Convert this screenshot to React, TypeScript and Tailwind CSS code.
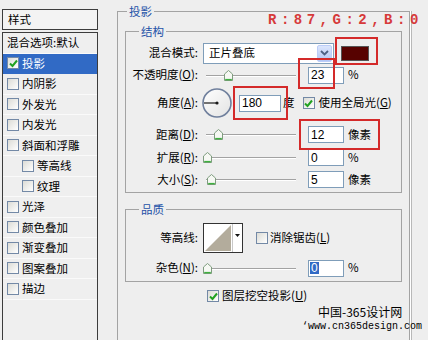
import type { ReactNode } from "react";

const items = [
  { t: "投影", on: true, sel: true },
  { t: "内阴影" },
  { t: "外发光" },
  { t: "内发光" },
  { t: "斜面和浮雕" },
  { t: "等高线", sub: true },
  { t: "纹理", sub: true },
  { t: "光泽" },
  { t: "颜色叠加" },
  { t: "渐变叠加" },
  { t: "图案叠加" },
  { t: "描边" },
];

function Check({ on }: { on?: boolean }) {
  return (
    <span className="w-[12px] h-[12px] shrink-0 border border-[#7389a6] bg-linear-to-br from-[#dcdcd6] to-white flex items-center justify-center">
      {on && (
        <svg width="9" height="9" viewBox="0 0 9 9">
          <path d="M1 4.5L3.5 7L8 1.5" stroke="#21a121" strokeWidth="2" fill="none" />
        </svg>
      )}
    </span>
  );
}

function Slider({ at }: { at: number }) {
  return (
    <div className="relative ml-[4px] w-[94px] h-[11px] shrink-0">
      <div className="absolute left-[4px] right-0 top-[5px] h-[2px] border-t border-[#a2a2a2] border-b border-b-white" />
      <svg className="absolute top-0" style={{ left: at }} width="9" height="11" viewBox="0 0 9 11">
        <path d="M0.5 10.5V4L4.5 0.5L8.5 4V10.5Z" fill="#f6f8f3" stroke="#7f9c7f" />
        <path d="M1.2 9.6H7.8" stroke="#3fb03f" strokeWidth="1.4" />
      </svg>
    </div>
  );
}

function Field({ v, sel, className = "w-[36px]" }: { v: string; sel?: boolean; className?: string }) {
  return (
    <span
      className={`${className} h-[17px] shrink-0 border border-[#7f9db9] bg-white pl-[1px] flex items-center font-['Liberation_Sans',sans-serif] text-[12px]`}
    >
      <span className={sel ? "bg-[#316ac5] text-white px-[1px]" : "px-[1px]"}>{v}</span>
    </span>
  );
}

function Label({ children }: { children: ReactNode }) {
  return <span className="w-[72px] shrink-0 text-right whitespace-nowrap">{children}</span>;
}

function SliderRow({ label, at, v, unit, className }: { label: ReactNode; at: number; v: string; unit: string; className: string }) {
  return (
    <div className={`flex items-center h-[21px] ${className}`}>
      <Label>{label}</Label>
      <Slider at={at} />
      <span className="ml-[12px]">
        <Field v={v} />
      </span>
      <span className="ml-[4px]">{unit}</span>
    </div>
  );
}

export default function App() {
  return (
    <div className="relative w-[428px] h-[340px] overflow-hidden bg-[#eeeeee] flex font-['Noto_Sans_CJK_SC',sans-serif] text-[11.5px] text-black leading-none">
      {/* style list */}
      <div className="ml-[2px] mt-[9px] w-[96px] shrink-0 flex flex-col">
        <div className="h-[21px] border border-[#3c3c3c] bg-[#f3f3f3] pl-[5px] flex items-center">样式</div>
        <div className="mt-[2px] flex-1 border-x border-t border-[#3c3c3c] bg-[#efefef]">
          <div className="h-[20.5px] pl-[4px] flex items-center border-b border-[#fafafa]">混合选项:默认</div>
          {items.map((it) => (
            <div
              key={it.t}
              className={`h-[20.5px] flex items-center gap-[3px] border-b ${it.sub ? "pl-[19px]" : "pl-[4px]"} ${
                it.sel ? "bg-[#316ac5] text-white border-[#316ac5]" : "border-[#fafafa]"
              }`}
            >
              <Check on={it.on} />
              {it.t}
            </div>
          ))}
        </div>
      </div>

      {/* drop shadow group */}
      <fieldset className="ml-[19px] mt-[5px] w-[293px] h-[345px] shrink-0 border border-[#a3a3a3] shadow-[1px_0_0_#ffffff,2px_0_0_#b8b8b8] flex flex-col">
        <legend className="ml-[9px] px-[2px] h-[12px] leading-[12px] text-[#2452a8]">投影</legend>

        <fieldset className="mt-[8px] mx-[7px] border border-[#a3a3a3] pb-[2px]">
          <legend className="ml-[13px] px-[2px] h-[12px] leading-[12px] text-[#2452a8]">结构</legend>

          <div className="mt-[4px] h-[24px] flex items-center">
            <Label>混合模式:</Label>
            <div className="ml-[5px] w-[131px] h-[21px] border border-[#7f9db9] bg-white flex items-center">
              <span className="flex-1 pl-[5px]">正片叠底</span>
              <span className="w-[15px] h-[17px] mr-[1px] rounded-[2px] border border-[#bccdf8] bg-linear-to-b from-[#dce6fd] to-[#b2c6f5] flex items-center justify-center">
                <svg width="9" height="6" viewBox="0 0 9 6">
                  <path d="M1 1L4.5 4.5L8 1" stroke="#4d6185" strokeWidth="1.8" fill="none" />
                </svg>
              </span>
            </div>
            <span className="ml-[7px] w-[28px] h-[15px] border border-[#555] bg-[#570200]" />
          </div>

          <div className="h-[20px] flex items-center">
            <Label>
              不透明度(<u>O</u>):
            </Label>
            <Slider at={21.5} />
            <span className="ml-[12px]">
              <Field v="23" />
            </span>
            <span className="ml-[4px]">%</span>
          </div>

          <div className="mt-[1px] h-[34px] flex items-center">
            <Label>
              角度(<u>A</u>):
            </Label>
            <svg className="ml-[4px] shrink-0" width="30" height="30" viewBox="0 0 30 30">
              <defs>
                <linearGradient id="dial" x1="0" y1="0" x2="1" y2="1">
                  <stop offset="0" stopColor="#ffffff" />
                  <stop offset="1" stopColor="#e3e3e3" />
                </linearGradient>
              </defs>
              <circle cx="15" cy="15" r="14" fill="url(#dial)" stroke="#6f7f9c" strokeWidth="1.6" />
              <path d="M2 15H15" stroke="#1a1a1a" strokeWidth="1.2" />
              <circle cx="15" cy="15" r="1.6" fill="#1a1a1a" />
            </svg>
            <span className="ml-[7px]">
              <Field v="180" className="w-[42px]" />
            </span>
            <span className="ml-[2px]">度</span>
            <span className="ml-[8px]">
              <Check on />
            </span>
            <span className="ml-[4px]">
              使用全局光(<u>G</u>)
            </span>
          </div>

          <SliderRow className="mt-[4px]" label={<>距离(<u>D</u>):</>} at={11.5} v="12" unit="像素" />
          <SliderRow className="mt-[2px]" label={<>扩展(<u>R</u>):</>} at={0.5} v="0" unit="%" />
          <SliderRow className="mt-[1px]" label={<>大小(<u>S</u>):</>} at={5} v="5" unit="像素" />
        </fieldset>

        <fieldset className="mt-[10px] mx-[7px] border border-[#a3a3a3] pb-[3px]">
          <legend className="ml-[13px] px-[2px] h-[12px] leading-[12px] text-[#2452a8]">品质</legend>

          <div className="mt-[8px] h-[30px] flex items-center">
            <Label>等高线:</Label>
            <svg className="ml-[5px] shrink-0" width="40" height="30" viewBox="0 0 40 30">
              <rect x="0.5" y="0.5" width="39" height="29" fill="#ffffff" stroke="#333" />
              <path d="M2 28L28 2V28Z" fill="#b3ac9c" />
              <path d="M29.5 1V29" stroke="#c8c8c8" />
              <path d="M32 11H37L34.5 14Z" fill="#111" />
            </svg>
            <span className="ml-[13px]">
              <Check />
            </span>
            <span className="ml-[2px]">
              消除锯齿(<u>L</u>)
            </span>
          </div>

          <div className="mt-[5px] h-[20px] flex items-center">
            <Label>
              杂色(<u>N</u>):
            </Label>
            <Slider at={0.5} />
            <span className="ml-[12px]">
              <Field v="0" sel />
            </span>
            <span className="ml-[4px]">%</span>
          </div>
        </fieldset>

        <div className="mt-[8px] ml-[89px] h-[12px] flex items-center gap-[3px]">
          <Check on />
          <span>
            图层挖空投影(<u>U</u>)
          </span>
        </div>
      </fieldset>

      {/* annotations over the screenshot */}
      <div className="absolute left-[268px] top-[13px] font-['Liberation_Mono',monospace] font-bold text-[14px] leading-[14px] tracking-[4.5px] text-[#d63a3a]">
        R:87,G:2,B:0
      </div>
      <div className="absolute left-[335px] top-[37px] w-[43px] h-[28px] border-2 border-[#d42a2a]" />
      <div className="absolute left-[298px] top-[58px] w-[37px] h-[31px] border-2 border-[#d42a2a]" />
      <div className="absolute left-[233px] top-[86px] w-[55px] h-[34px] border-2 border-[#d42a2a]" />
      <div className="absolute left-[299px] top-[119px] w-[81px] h-[31px] border-2 border-[#d42a2a]" />

      <div className="absolute left-[318px] top-[305px] text-[12px] leading-[14px]">中国-365设计网</div>
      <div className="absolute left-[302px] top-[321px] font-['Liberation_Mono',monospace] text-[10px] leading-[12px]">
        ‘www.cn365design.com
      </div>
    </div>
  );
}
